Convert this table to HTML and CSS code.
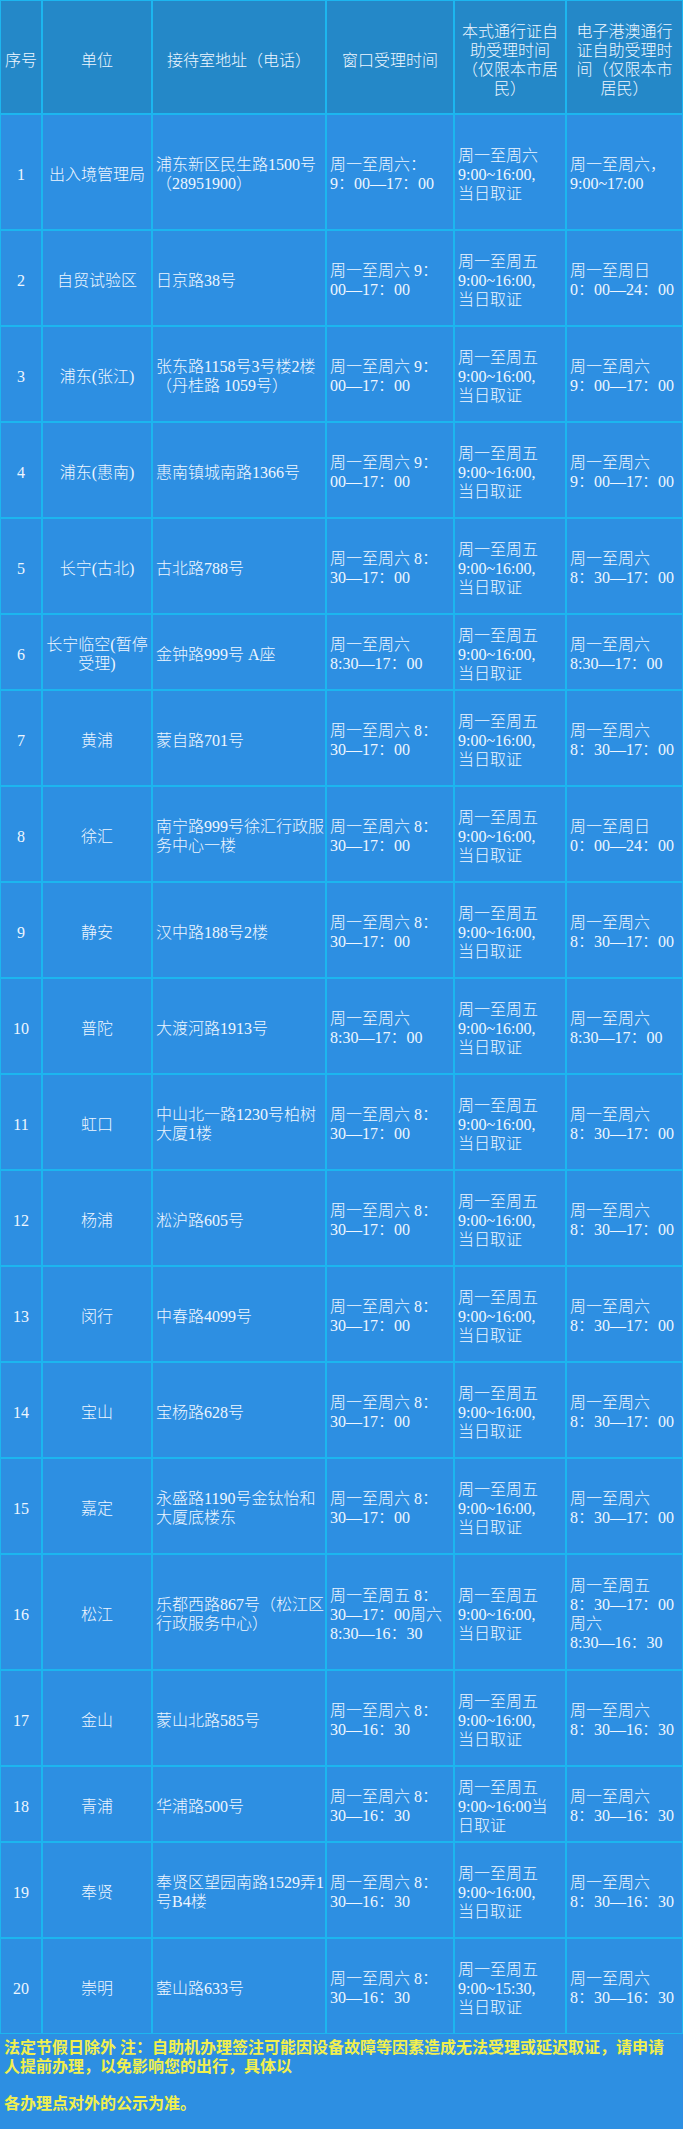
FILE: index.html
```html
<!DOCTYPE html>
<html lang="zh-CN">
<head>
<meta charset="utf-8">
<title>出入境接待室一览</title>
<link rel="stylesheet" href="styles.css">
</head>
<body>
<div class="sheet">
  <div class="grid">
    <div class="row head">
      <div class="c mid">序号</div>
      <div class="c mid">单位</div>
      <div class="c mid">接待室地址（电话）</div>
      <div class="c mid">窗口受理时间</div>
      <div class="c mid">本式通行证自<br>助受理时间<br>（仅限本市居<br>民）</div>
      <div class="c mid">电子港澳通行<br>证自助受理时<br>间（仅限本市<br>居民）</div>
    </div>

    <div class="row tall">
      <div class="c mid">1</div>
      <div class="c mid">出入境管理局</div>
      <div class="c txt">浦东新区民生路1500号<br>（28951900）</div>
      <div class="c txt">周一至周六：<br>9：00—17：00</div>
      <div class="c txt">周一至周六<br>9:00~16:00,<br>当日取证</div>
      <div class="c txt">周一至周六，<br>9:00~17:00</div>
    </div>

    <div class="row">
      <div class="c mid">2</div>
      <div class="c mid">自贸试验区</div>
      <div class="c txt">日京路38号</div>
      <div class="c txt">周一至周六 9：<br>00—17：00</div>
      <div class="c txt">周一至周五<br>9:00~16:00,<br>当日取证</div>
      <div class="c txt">周一至周日<br>0：00—24：00</div>
    </div>

    <div class="row">
      <div class="c mid">3</div>
      <div class="c mid">浦东(张江)</div>
      <div class="c txt">张东路1158号3号楼2楼<br>（丹桂路 1059号）</div>
      <div class="c txt">周一至周六 9：<br>00—17：00</div>
      <div class="c txt">周一至周五<br>9:00~16:00,<br>当日取证</div>
      <div class="c txt">周一至周六<br>9：00—17：00</div>
    </div>

    <div class="row">
      <div class="c mid">4</div>
      <div class="c mid">浦东(惠南)</div>
      <div class="c txt">惠南镇城南路1366号</div>
      <div class="c txt">周一至周六 9：<br>00—17：00</div>
      <div class="c txt">周一至周五<br>9:00~16:00,<br>当日取证</div>
      <div class="c txt">周一至周六<br>9：00—17：00</div>
    </div>

    <div class="row">
      <div class="c mid">5</div>
      <div class="c mid">长宁(古北)</div>
      <div class="c txt">古北路788号</div>
      <div class="c txt">周一至周六 8：<br>30—17：00</div>
      <div class="c txt">周一至周五<br>9:00~16:00,<br>当日取证</div>
      <div class="c txt">周一至周六<br>8：30—17：00</div>
    </div>

    <div class="row short">
      <div class="c mid">6</div>
      <div class="c mid">长宁临空(暂停<br>受理)</div>
      <div class="c txt">金钟路999号 A座</div>
      <div class="c txt">周一至周六<br>8:30—17：00</div>
      <div class="c txt">周一至周五<br>9:00~16:00,<br>当日取证</div>
      <div class="c txt">周一至周六<br>8:30—17：00</div>
    </div>

    <div class="row">
      <div class="c mid">7</div>
      <div class="c mid">黄浦</div>
      <div class="c txt">蒙自路701号</div>
      <div class="c txt">周一至周六 8：<br>30—17：00</div>
      <div class="c txt">周一至周五<br>9:00~16:00,<br>当日取证</div>
      <div class="c txt">周一至周六<br>8：30—17：00</div>
    </div>

    <div class="row">
      <div class="c mid">8</div>
      <div class="c mid">徐汇</div>
      <div class="c txt">南宁路999号徐汇行政服<br>务中心一楼</div>
      <div class="c txt">周一至周六 8：<br>30—17：00</div>
      <div class="c txt">周一至周五<br>9:00~16:00,<br>当日取证</div>
      <div class="c txt">周一至周日<br>0：00—24：00</div>
    </div>

    <div class="row">
      <div class="c mid">9</div>
      <div class="c mid">静安</div>
      <div class="c txt">汉中路188号2楼</div>
      <div class="c txt">周一至周六 8：<br>30—17：00</div>
      <div class="c txt">周一至周五<br>9:00~16:00,<br>当日取证</div>
      <div class="c txt">周一至周六<br>8：30—17：00</div>
    </div>

    <div class="row">
      <div class="c mid">10</div>
      <div class="c mid">普陀</div>
      <div class="c txt">大渡河路1913号</div>
      <div class="c txt">周一至周六<br>8:30—17：00</div>
      <div class="c txt">周一至周五<br>9:00~16:00,<br>当日取证</div>
      <div class="c txt">周一至周六<br>8:30—17：00</div>
    </div>

    <div class="row">
      <div class="c mid">11</div>
      <div class="c mid">虹口</div>
      <div class="c txt">中山北一路1230号柏树<br>大厦1楼</div>
      <div class="c txt">周一至周六 8：<br>30—17：00</div>
      <div class="c txt">周一至周五<br>9:00~16:00,<br>当日取证</div>
      <div class="c txt">周一至周六<br>8：30—17：00</div>
    </div>

    <div class="row">
      <div class="c mid">12</div>
      <div class="c mid">杨浦</div>
      <div class="c txt">淞沪路605号</div>
      <div class="c txt">周一至周六 8：<br>30—17：00</div>
      <div class="c txt">周一至周五<br>9:00~16:00,<br>当日取证</div>
      <div class="c txt">周一至周六<br>8：30—17：00</div>
    </div>

    <div class="row">
      <div class="c mid">13</div>
      <div class="c mid">闵行</div>
      <div class="c txt">中春路4099号</div>
      <div class="c txt">周一至周六 8：<br>30—17：00</div>
      <div class="c txt">周一至周五<br>9:00~16:00,<br>当日取证</div>
      <div class="c txt">周一至周六<br>8：30—17：00</div>
    </div>

    <div class="row">
      <div class="c mid">14</div>
      <div class="c mid">宝山</div>
      <div class="c txt">宝杨路628号</div>
      <div class="c txt">周一至周六 8：<br>30—17：00</div>
      <div class="c txt">周一至周五<br>9:00~16:00,<br>当日取证</div>
      <div class="c txt">周一至周六<br>8：30—17：00</div>
    </div>

    <div class="row">
      <div class="c mid">15</div>
      <div class="c mid">嘉定</div>
      <div class="c txt">永盛路1190号金钛怡和<br>大厦底楼东</div>
      <div class="c txt">周一至周六 8：<br>30—17：00</div>
      <div class="c txt">周一至周五<br>9:00~16:00,<br>当日取证</div>
      <div class="c txt">周一至周六<br>8：30—17：00</div>
    </div>

    <div class="row tall">
      <div class="c mid">16</div>
      <div class="c mid">松江</div>
      <div class="c txt">乐都西路867号（松江区<br>行政服务中心）</div>
      <div class="c txt">周一至周五 8：<br>30—17：00周六<br>8:30—16：30</div>
      <div class="c txt">周一至周五<br>9:00~16:00,<br>当日取证</div>
      <div class="c txt">周一至周五<br>8：30—17：00<br>周六<br>8:30—16：30</div>
    </div>

    <div class="row">
      <div class="c mid">17</div>
      <div class="c mid">金山</div>
      <div class="c txt">蒙山北路585号</div>
      <div class="c txt">周一至周六 8：<br>30—16：30</div>
      <div class="c txt">周一至周五<br>9:00~16:00,<br>当日取证</div>
      <div class="c txt">周一至周六<br>8：30—16：30</div>
    </div>

    <div class="row short">
      <div class="c mid">18</div>
      <div class="c mid">青浦</div>
      <div class="c txt">华浦路500号</div>
      <div class="c txt">周一至周六 8：<br>30—16：30</div>
      <div class="c txt">周一至周五<br>9:00~16:00当<br>日取证</div>
      <div class="c txt">周一至周六<br>8：30—16：30</div>
    </div>

    <div class="row">
      <div class="c mid">19</div>
      <div class="c mid">奉贤</div>
      <div class="c txt">奉贤区望园南路1529弄1<br>号B4楼</div>
      <div class="c txt">周一至周六 8：<br>30—16：30</div>
      <div class="c txt">周一至周五<br>9:00~16:00,<br>当日取证</div>
      <div class="c txt">周一至周六<br>8：30—16：30</div>
    </div>

    <div class="row">
      <div class="c mid">20</div>
      <div class="c mid">崇明</div>
      <div class="c txt">蓥山路633号</div>
      <div class="c txt">周一至周六 8：<br>30—16：30</div>
      <div class="c txt">周一至周五<br>9:00~15:30,<br>当日取证</div>
      <div class="c txt">周一至周六<br>8：30—16：30</div>
    </div>
  </div>

  <p class="note">法定节假日除外 注：自助机办理签注可能因设备故障等因素造成无法受理或延迟取证，请申请<br>人提前办理，以免影响您的出行，具体以<br><br>各办理点对外的公示为准。</p>
</div>
</body>
</html>
```

FILE: styles.css
```css
html, body {
  margin: 0;
  padding: 0;
  background: #2d8fe2;
}

.sheet {
  width: 683px;
  min-height: 2129px;
  background: #2d8fe2;
}

.grid {
  display: flex;
  flex-direction: column;
  gap: 2px;
  padding: 1px;
  background: #1cb6ef;
}

.row {
  display: grid;
  grid-template-columns: 40px 108px 172px 126px 110px 1fr;
  gap: 2px;
  height: 94px;
}

.row.head {
  height: 112px;
}

.row.tall {
  height: 114px;
}

.row.short {
  height: 74px;
}

.c {
  background: #2d8fe2;
  color: #eef6ff;
  font-family: "Liberation Serif", "Noto Sans CJK SC", serif;
  font-weight: 300;
  font-size: 16px;
  line-height: 19px;
  white-space: nowrap;
  display: flex;
  flex-direction: column;
  justify-content: center;
  padding-top: 4px;
  box-sizing: border-box;
  overflow: visible;
}

.head .c {
  background: #2488c8;
  padding-top: 6px;
}

.mid {
  align-items: center;
  text-align: center;
}

.txt {
  align-items: flex-start;
  text-align: left;
  padding-left: 3px;
}

.note {
  margin: 0;
  padding: 5px 4px 0 4px;
  color: #f1ef4e;
  font-family: "Liberation Serif", "Noto Sans CJK SC", serif;
  font-weight: 700;
  font-size: 16px;
  line-height: 18.5px;
  white-space: nowrap;
}
```
